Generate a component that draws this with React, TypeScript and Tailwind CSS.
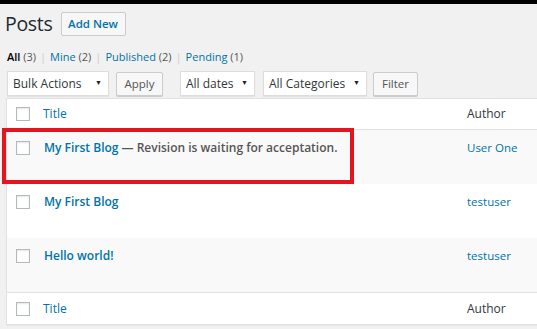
import React from 'react';

const font = "font-['Open_Sans','Noto_Sans',sans-serif]";

const Checkbox = () => (
  <span className="block w-[14px] h-[14px] bg-white border border-[#b4b9be] shadow-[inset_0_1px_2px_rgba(0,0,0,0.1)]" />
);

const Select = ({ label, width }: { label: string; width: string }) => (
  <div
    className={`${width} h-[25px] bg-white border border-[#ddd] shadow-[0_1px_1px_rgba(0,0,0,0.05)] flex items-center justify-between pl-[5px] pr-[6px] text-[12px] text-[#32373c] whitespace-nowrap`}
  >
    <span>{label}</span>
    <span className="text-[7px] text-[#222]">▼</span>
  </div>
);

const Btn = ({ label, width }: { label: string; width: string }) => (
  <div
    className={`${width} h-[24px] bg-[#f7f7f7] border border-[#ccc] rounded-[2px] shadow-[0_1px_0_#ccc] flex items-center justify-center text-[11.5px] text-[#555]`}
  >
    {label}
  </div>
);

const posts = [
  { title: 'My First Blog', state: ' — Revision is waiting for acceptation.', author: 'User One' },
  { title: 'My First Blog', state: '', author: 'testuser' },
  { title: 'Hello world!', state: '', author: 'testuser' },
];

export default function App() {
  return (
    <div className={`relative w-[537px] h-[329px] overflow-hidden bg-[#f1f1f1] border-t-4 border-black ${font}`}>
      {/* heading */}
      <div className="flex items-center gap-[8px] pl-[5px] pt-[7px]">
        <h1 className="text-[19.5px] leading-[26px] text-[#23282d] tracking-[-0.3px]">Posts</h1>
        <div className="h-[24px] w-[65px] flex items-center justify-center bg-[#f7f7f7] border border-[#ccc] rounded-[2px] text-[11.5px] font-semibold text-[#0073aa]">
          Add New
        </div>
      </div>

      {/* status links */}
      <div className="pl-[7px] mt-[12px] text-[11px] leading-[16px] text-[#555] flex items-center gap-[4px]">
        <span><span className="font-semibold text-black">All</span> (3)</span>
        <span className="text-[#ccc]">|</span>
        <span><span className="text-[#0073aa]">Mine</span> (2)</span>
        <span className="text-[#ccc]">|</span>
        <span><span className="text-[#0073aa]">Published</span> (2)</span>
        <span className="text-[#ccc]">|</span>
        <span><span className="text-[#0073aa]">Pending</span> (1)</span>
      </div>

      {/* filters */}
      <div className="flex items-center pl-[7px] mt-[6px]">
        <Select label="Bulk Actions" width="w-[102px]" />
        <div className="ml-[7px]"><Btn label="Apply" width="w-[47px]" /></div>
        <div className="ml-[17px]"><Select label="All dates" width="w-[75px]" /></div>
        <div className="ml-[8px]"><Select label="All Categories" width="w-[104px]" /></div>
        <div className="ml-[6px]"><Btn label="Filter" width="w-[45px]" /></div>
      </div>

      {/* table */}
      <div className="ml-[6px] mt-[2px] bg-white border-l border-t border-b border-[#e1e1e1] shadow-[0_1px_1px_rgba(0,0,0,0.04)] text-[12px]">
        <div className="h-[31px] flex items-center border-b border-[#e1e1e1]">
          <div className="w-[36px] pl-[9px]"><Checkbox /></div>
          <div className="flex-1 text-[#0073aa]">Title</div>
          <div className="w-[70px] text-[#32373c]">Author</div>
        </div>
        {posts.map((p, i) => (
          <div key={i} className={`h-[54px] flex items-start pt-[10px] ${i % 2 === 0 ? 'bg-[#f9f9f9]' : 'bg-white'}`}>
            <div className="w-[36px] pl-[9px] pt-[1px]"><Checkbox /></div>
            <div className="flex-1 pl-[1px] text-[12px] leading-[16px]">
              <span className="font-semibold text-[#0073aa]">{p.title}</span>
              {p.state && <span className="font-semibold text-[#555]">{p.state}</span>}
            </div>
            <div className="w-[70px] text-[11.5px] leading-[16px] text-[#0073aa]">{p.author}</div>
          </div>
        ))}
        <div className="h-[32px] flex items-center border-t border-[#e1e1e1]">
          <div className="w-[36px] pl-[9px]"><Checkbox /></div>
          <div className="flex-1 text-[#0073aa]">Title</div>
          <div className="w-[70px] text-[#32373c]">Author</div>
        </div>
      </div>

      {/* annotation */}
      <div className="absolute left-[2px] top-[124px] w-[352px] h-[56px] border-4 border-[#e4151c]" />
    </div>
  );
}
